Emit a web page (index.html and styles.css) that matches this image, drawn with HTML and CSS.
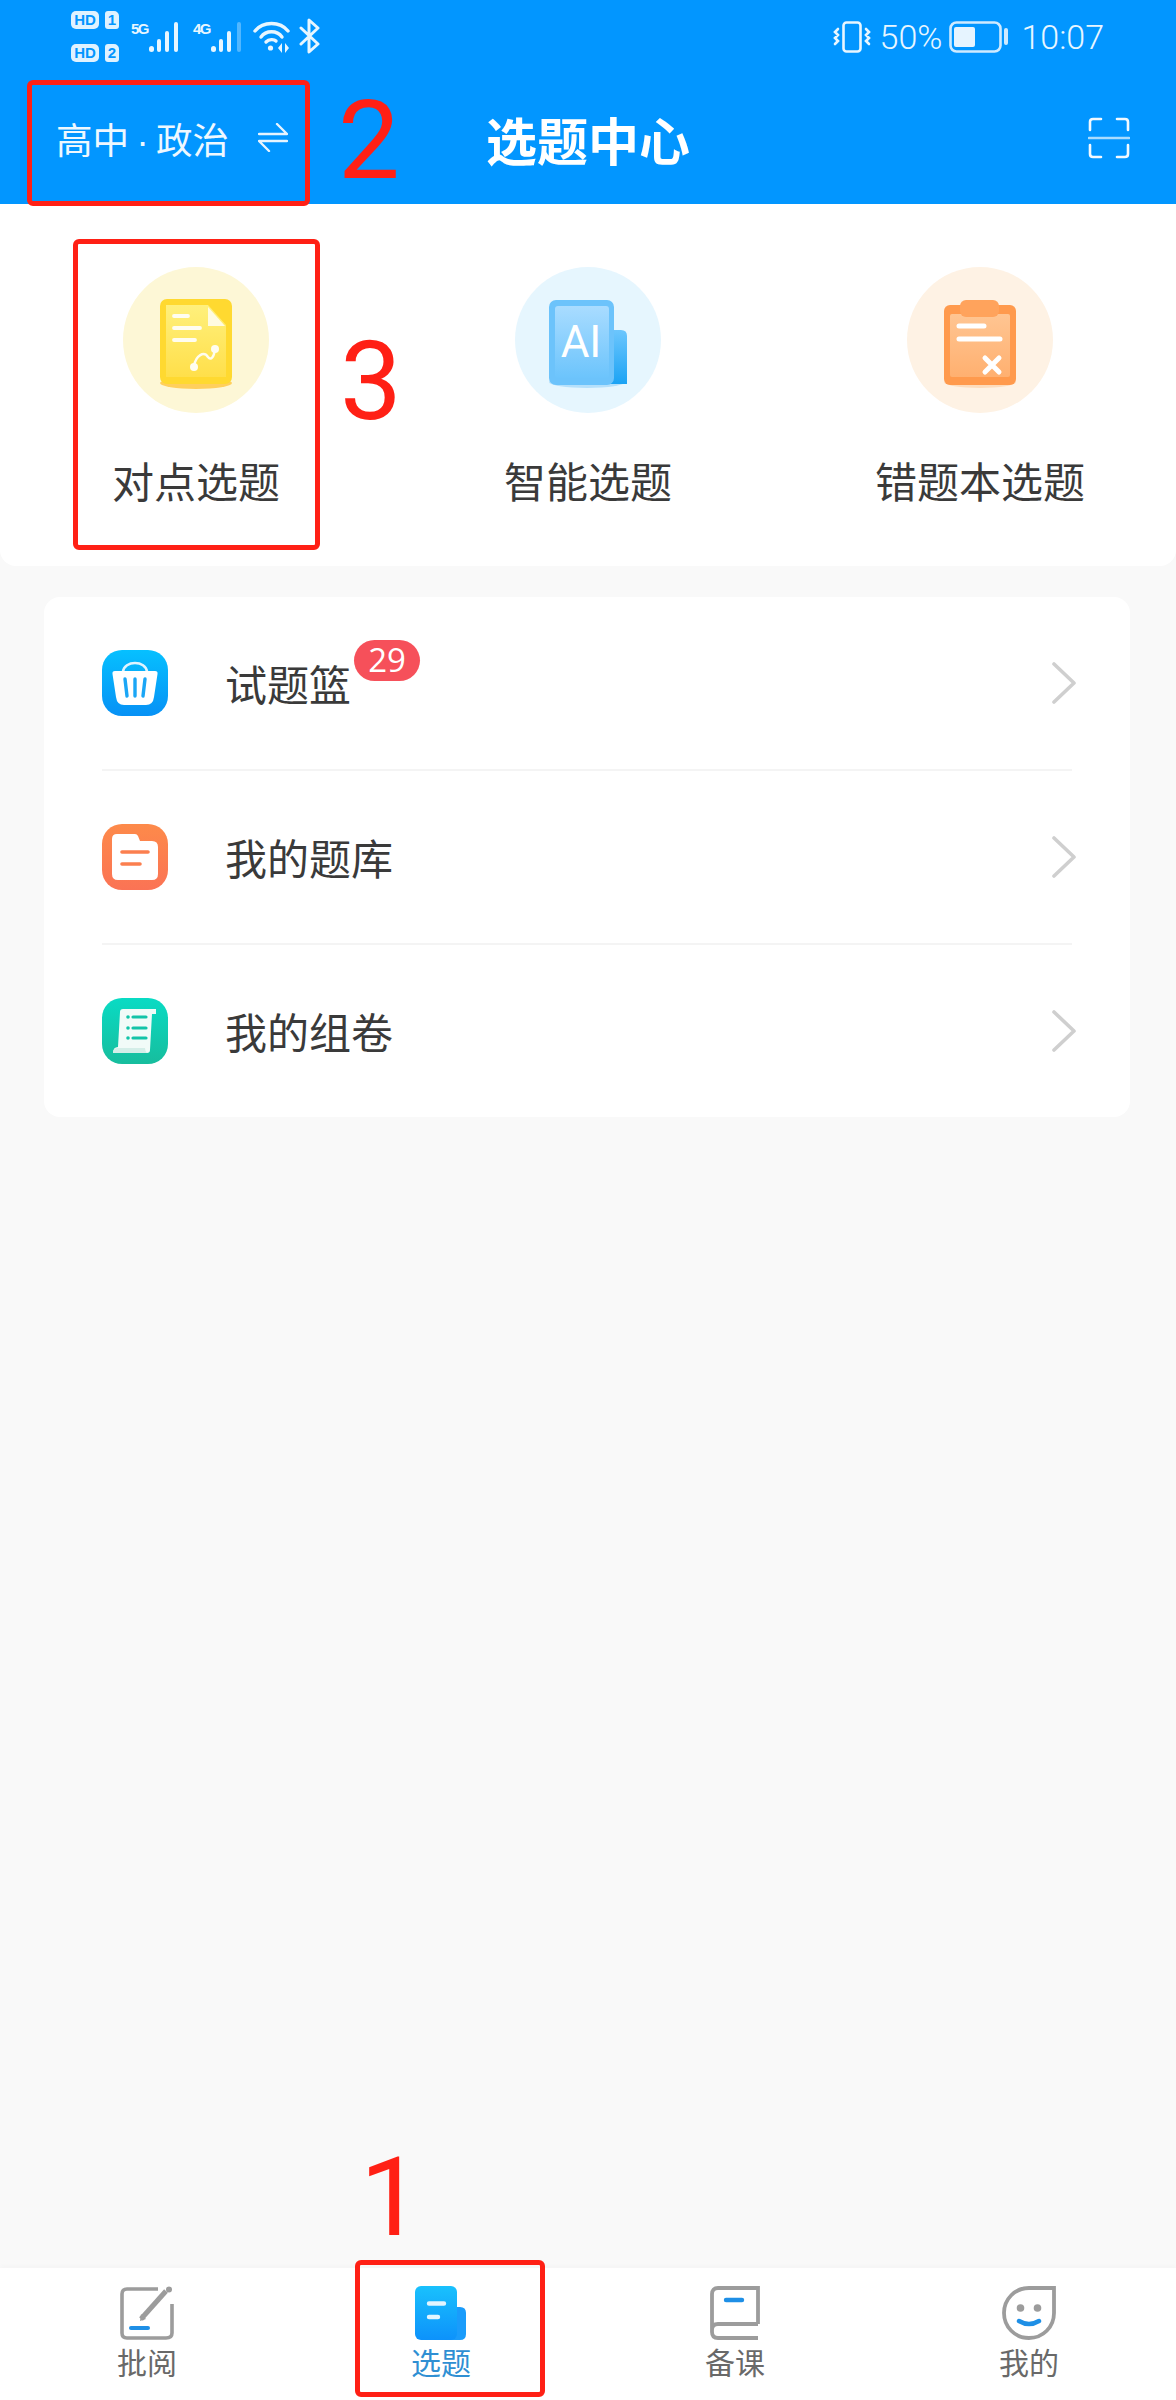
FILE: index.html
```html
<!DOCTYPE html>
<html lang="zh-CN">
<head>
  <meta charset="UTF-8">
  <meta name="viewport" content="width=device-width, initial-scale=1.0">
  <title>选题中心</title>
  <link rel="stylesheet" href="styles.css">
</head>
<body>
<div class="page">
  <!-- Header -->
  <header class="header">
    <div class="status-bar">
      <div class="status-left">
        <div class="sims">
          <div class="sim"><span class="hd">HD</span><span class="sim-no">1</span></div>
          <div class="sim"><span class="hd">HD</span><span class="sim-no">2</span></div>
        </div>
        <span class="net net-5g">5G</span>
        <svg class="bars" width="33" height="32" viewBox="0 0 33 32" fill="#e8f6ff">
          <rect x="1" y="25" width="5" height="6" rx="2.5"/><rect x="9" y="18" width="4" height="13" rx="2"/><rect x="17" y="10" width="4" height="21" rx="2"/><rect x="26" y="1" width="4" height="30" rx="2"/>
        </svg>
        <span class="net net-4g">4G</span>
        <svg class="bars" width="33" height="32" viewBox="0 0 33 32" fill="#e8f6ff">
          <rect x="1" y="25" width="5" height="6" rx="2.5"/><rect x="9" y="18" width="4" height="13" rx="2"/><rect x="17" y="10" width="4" height="21" rx="2"/><rect x="27" y="1" width="4" height="30" rx="2" opacity=".35"/>
        </svg>
        <svg class="wifi" width="38" height="32" viewBox="0 0 38 32" fill="none" stroke="#e8f6ff" stroke-width="3.4" stroke-linecap="round">
          <path d="M2 10C10 0 27 0 35 10"/>
          <path d="M8 16C13 9 24 9 29 16"/>
          <path d="M13 21C16 18 21 18 23 20"/>
          <circle cx="17.500" cy="27" r="2.600" fill="#e8f6ff" stroke="none"/>
          <path d="M29 22l-4 5 4 5zM32 22l4 5-4 5z" fill="#e8f6ff" stroke="none"/>
        </svg>
        <svg class="bt" width="21" height="36" viewBox="0 0 21 36" fill="none" stroke="#e8f6ff" stroke-width="3" stroke-linejoin="round" stroke-linecap="round">
          <path d="M2 10L19 26 10 34V2L19 10 2 26"/>
        </svg>
      </div>
      <div class="status-right">
        <svg class="vibrate" width="38" height="32" viewBox="0 0 38 32" fill="none" stroke="#e8f6ff" stroke-width="2.600">
          <rect x="10.500" y="1.500" width="17" height="29" rx="3"/>
          <path d="M5 8L2 11l3 3-3 3 3 3-3 3M33 8l3 3-3 3 3 3-3 3 3 3" stroke-linecap="round"/>
        </svg>
        <span class="stat-text pct">50%</span>
        <svg class="battery" width="60" height="32" viewBox="0 0 60 32">
          <rect x="1.500" y="1.500" width="50" height="29" rx="6" fill="none" stroke="#cfeaff" stroke-width="2.600"/>
          <rect x="5" y="6" width="21" height="20" rx="2" fill="#e6f4ff"/>
          <rect x="55" y="7" width="4" height="17" rx="2" fill="#cfeaff"/>
        </svg>
        <span class="stat-text time">10:07</span>
      </div>
    </div>

    <div class="nav-row">
      <div class="subject">
        <span class="subject-name">高中<span class="subject-dot">·</span>政治</span>
        <svg width="30" height="29" viewBox="0 0 30 29" fill="none" stroke="#e6f4ff" stroke-width="2.400" stroke-linecap="round" stroke-linejoin="round">
          <path d="M1 11H29L19 1"/>
          <path d="M29 18H1L11 28"/>
        </svg>
      </div>
      <h1 class="title">选题中心</h1>
      <svg class="scan" width="42" height="42" viewBox="0 0 42 42" fill="none" stroke="#f2f9ff" stroke-width="2.600" stroke-linecap="round">
        <path d="M13 2H5Q2 2 2 5V13M29 2H37Q40 2 40 5V13M2 28V37Q2 40 5 40H13M40 28V37Q40 40 37 40H29"/>
        <path d="M1 21H41" stroke="#a9dcff"/>
      </svg>
    </div>
  </header>

  <!-- Pick modes -->
  <section class="modes">
    <div class="mode">
      <div class="mode-circle circle-yellow">
        <svg width="72" height="90" viewBox="0 0 72 90">
          <defs>
            <linearGradient id="yellowDoc" x1="0" y1="0" x2="0" y2="1"><stop offset="0" stop-color="#fff07c"/><stop offset="1" stop-color="#ffdf4a"/></linearGradient>
          </defs>
          <ellipse cx="36" cy="84" rx="36" ry="6" fill="#ffcf5c"/>
          <rect x="0" y="0" width="72" height="85" rx="7" fill="#ffd930"/>
          <path d="M6 6H48L66 26V78H6Z" fill="url(#yellowDoc)"/>
          <path d="M48 8L65 27H48Z" fill="#fffbe0"/>
          <g fill="none" stroke="#fffdf0" stroke-linecap="round">
            <path d="M14 17H28M14 29H40M14 41H35" stroke-width="3.800"/>
            <path d="M34 67C36 56 44 52 48 58 51 62 54 58 55 50" stroke-width="2.400"/>
          </g>
          <circle cx="34" cy="68" r="4" fill="#fffdf0"/>
          <circle cx="55" cy="50" r="4" fill="#fffdf0"/>
        </svg>
      </div>
      <div class="mode-name">对点选题</div>
    </div>
    <div class="mode">
      <div class="mode-circle circle-blue">
        <svg width="78" height="88" viewBox="0 0 78 88">
          <defs>
            <linearGradient id="aiDoc" x1="0" y1="0" x2="0" y2="1"><stop offset="0" stop-color="#a9dcff"/><stop offset="1" stop-color="#6cc4fc"/></linearGradient>
            <linearGradient id="aiSide" x1="0" y1="0" x2="0" y2="1"><stop offset="0" stop-color="#6cc6fd"/><stop offset="1" stop-color="#1ba3f4"/></linearGradient>
          </defs>
          <ellipse cx="38" cy="82" rx="38" ry="6" fill="#b5e0fb"/>
          <path d="M60 30H72Q78 30 78 36V84H60Z" fill="url(#aiSide)"/>
          <rect x="0" y="0" width="65" height="85" rx="7" fill="#6cc3fb"/>
          <rect x="6" y="6" width="54" height="72" rx="3" fill="url(#aiDoc)"/>
          <text class="ai-text" x="32" y="57" text-anchor="middle">AI</text>
        </svg>
      </div>
      <div class="mode-name">智能选题</div>
    </div>
    <div class="mode">
      <div class="mode-circle circle-orange">
        <svg width="72" height="88" viewBox="0 0 72 88">
          <defs>
            <linearGradient id="clipBody" x1="0" y1="0" x2="0" y2="1"><stop offset="0" stop-color="#ffc592"/><stop offset="1" stop-color="#ffb070"/></linearGradient>
          </defs>
          <ellipse cx="36" cy="82" rx="36" ry="6" fill="#fddcbc"/>
          <rect x="0" y="5" width="72" height="80" rx="6" fill="#ff9a4d"/>
          <rect x="6" y="14" width="60" height="63" rx="2" fill="url(#clipBody)"/>
          <rect x="16" y="0" width="39" height="17" rx="6" fill="#ffa35c"/>
          <path d="M15 26H40M15 39H56M41 58L55 72M55 58L41 72" fill="none" stroke="#fff" stroke-width="5" stroke-linecap="round"/>
        </svg>
      </div>
      <div class="mode-name">错题本选题</div>
    </div>
  </section>

  <!-- Menu list -->
  <section class="menu">
    <div class="menu-row">
      <svg class="menu-icon" width="66" height="66" viewBox="0 0 66 66">
        <defs>
          <linearGradient id="basketBg" x1="0" y1="0" x2="0" y2="1"><stop offset="0" stop-color="#06c0ff"/><stop offset="1" stop-color="#0791f5"/></linearGradient>
        </defs>
        <rect width="66" height="66" rx="20" fill="url(#basketBg)"/>
        <path d="M21 22C22 10 44 10 45 22" fill="none" stroke="#dff4ff" stroke-width="2.600"/>
        <path d="M13 21H53Q56 21 55.500 24L52 47Q51 55 44 55H22Q15 55 14 47L10.500 24Q10 21 13 21Z" fill="#fff"/>
        <path d="M23 29L25 46M33 29V46M43 29L41 46" stroke="#1aa6f6" stroke-width="3.400" stroke-linecap="round"/>
      </svg>
      <div class="menu-label">试题篮<span class="badge">29</span></div>
      <svg class="chevron" width="24" height="42" viewBox="0 0 24 42" fill="none" stroke="#cfcfcf" stroke-width="3.600" stroke-linecap="round" stroke-linejoin="round">
        <path d="M2 2L22 21 2 40"/>
      </svg>
    </div>
    <div class="menu-row">
      <svg class="menu-icon" width="66" height="66" viewBox="0 0 66 66">
        <defs>
          <linearGradient id="folderBg" x1="0" y1="0" x2="0" y2="1"><stop offset="0" stop-color="#fd8a4a"/><stop offset="1" stop-color="#fb7355"/></linearGradient>
        </defs>
        <rect width="66" height="66" rx="20" fill="url(#folderBg)"/>
        <path d="M15 10H33Q35 10 36 12L38 17H50Q56 17 56 23V50Q56 56 50 56H16Q10 56 10 50V15Q10 10 15 10Z" fill="#fff"/>
        <path d="M20 28H46M20 40H38" stroke="#fb7f4f" stroke-width="3.600" stroke-linecap="round"/>
      </svg>
      <div class="menu-label">我的题库</div>
      <svg class="chevron" width="24" height="42" viewBox="0 0 24 42" fill="none" stroke="#cfcfcf" stroke-width="3.600" stroke-linecap="round" stroke-linejoin="round">
        <path d="M2 2L22 21 2 40"/>
      </svg>
    </div>
    <div class="menu-row">
      <svg class="menu-icon" width="66" height="66" viewBox="0 0 66 66">
        <defs>
          <linearGradient id="scrollBg" x1="0" y1="0" x2="0" y2="1"><stop offset="0" stop-color="#09dbc4"/><stop offset="1" stop-color="#17bd9d"/></linearGradient>
        </defs>
        <rect width="66" height="66" rx="20" fill="url(#scrollBg)"/>
        <path d="M18 14Q18 11 21 11H54V16H50L48 52Q48 55 45 55H11Q11 49 16 49Z" fill="#f1fbf8"/>
        <path d="M11 55Q11 50 16 50H43Q43 53 45 55Z" fill="#d4eee8"/>
        <circle cx="26" cy="19" r="1.800" fill="#12c4a8"/><circle cx="26" cy="30" r="1.800" fill="#12c4a8"/><circle cx="26" cy="40" r="1.800" fill="#12c4a8"/>
        <path d="M31 19H44M31 30H44M31 40H44" stroke="#12c4a8" stroke-width="3.200" stroke-linecap="round"/>
      </svg>
      <div class="menu-label">我的组卷</div>
      <svg class="chevron" width="24" height="42" viewBox="0 0 24 42" fill="none" stroke="#cfcfcf" stroke-width="3.600" stroke-linecap="round" stroke-linejoin="round">
        <path d="M2 2L22 21 2 40"/>
      </svg>
    </div>
  </section>

  <div class="spacer"></div>

  <!-- Tab bar -->
  <nav class="tabbar">
    <div class="tab">
      <svg width="54" height="54" viewBox="0 0 54 54" fill="none">
        <path d="M38 3H7Q2 3 2 8V47Q2 52 7 52H46Q52 52 52 47V18" stroke="#9c9c9c" stroke-width="3.600"/>
        <path d="M21 33L46 5" stroke="#9c9c9c" stroke-width="5"/>
        <path d="M21 28L26 33 20 35Z" fill="#9c9c9c"/>
        <circle cx="49" cy="3.500" r="3" fill="#9c9c9c"/>
        <path d="M11 42H28" stroke="#1e8fe6" stroke-width="4" stroke-linecap="round"/>
      </svg>
      <span class="tab-name">批阅</span>
    </div>
    <div class="tab tab-active">
      <svg width="52" height="54" viewBox="0 0 52 54">
        <defs>
          <linearGradient id="tabFront" x1="0" y1="0" x2="0" y2="1"><stop offset="0" stop-color="#19c1fd"/><stop offset="1" stop-color="#0d92fb"/></linearGradient>
        </defs>
        <path d="M36 21H45Q51 21 51 27V48Q51 54 45 54H36Z" fill="#1a9cfb"/>
        <rect x="0" y="0" width="42" height="54" rx="6" fill="url(#tabFront)"/>
        <path d="M14 17.500H29M14 31H23" stroke="#e2f5ff" stroke-width="4.400" stroke-linecap="round"/>
      </svg>
      <span class="tab-name">选题</span>
    </div>
    <div class="tab">
      <svg width="50" height="54" viewBox="0 0 50 54" fill="none" stroke="#9c9c9c" stroke-width="3.800">
        <path d="M48 38V2H8Q2 2 2 8V46Q2 52 8 52H48M2 44Q2 38 8 38H48"/>
        <path d="M16 14H32" stroke="#1e8fe6" stroke-width="4.400" stroke-linecap="round"/>
      </svg>
      <span class="tab-name">备课</span>
    </div>
    <div class="tab">
      <svg width="54" height="54" viewBox="0 0 54 54" fill="none">
        <path d="M52 2V27C52 41 41 52 27 52S2 41 2 27 13 2 27 2Z" stroke="#9c9c9c" stroke-width="3.800"/>
        <circle cx="18.500" cy="22" r="3.800" fill="#9c9c9c"/>
        <circle cx="35.500" cy="22" r="3.800" fill="#9c9c9c"/>
        <path d="M17 35Q27 41 37 35" stroke="#1e8fe6" stroke-width="4.400" stroke-linecap="round"/>
      </svg>
      <span class="tab-name">我的</span>
    </div>
  </nav>

  <!-- Red annotations on top of the screenshot -->
  <div class="mark mark-subject"></div>
  <div class="mark mark-mode"></div>
  <div class="mark mark-tab"></div>
  <span class="mark-no no-1">1</span>
  <span class="mark-no no-2">2</span>
  <span class="mark-no no-3">3</span>
</div>
</body>
</html>
```

FILE: styles.css
```css
:root {
  --blue: #0296ff;
  --text: #3a3a3a;
  --bg: #f9f9f9;
  --mark: #ff2015;
}

* {
  margin: 0;
  padding: 0;
  box-sizing: border-box;
}

body {
  background: var(--bg);
  color: var(--text);
  font-family: "Noto Sans CJK SC", "Noto Sans", sans-serif;
}

.page {
  position: relative;
  display: flex;
  flex-direction: column;
  height: 2400px;
  overflow: hidden;
}

/* Header */
.header {
  background: var(--blue);
  color: #fff;
  height: 204px;
  flex-shrink: 0;
}

.status-bar {
  display: flex;
  justify-content: space-between;
  height: 70px;
  padding: 0 72px 0 71px;
}

.status-left {
  display: flex;
  align-items: flex-start;
  padding-top: 11px;
}

.status-right {
  display: flex;
  align-items: flex-start;
  padding-top: 21px;
}

.sims {
  display: flex;
  flex-direction: column;
  gap: 15px;
  width: 60px;
}

.sim {
  display: flex;
  gap: 6px;
}

.hd,
.sim-no {
  background: #dff2ff;
  color: var(--blue);
  font-family: "Liberation Sans", sans-serif;
  font-weight: 700;
  font-size: 15px;
  line-height: 18px;
  height: 18px;
  text-align: center;
}

.hd {
  width: 28px;
  border-radius: 5px;
}

.sim-no {
  width: 14px;
  border-radius: 3px 5px 3px 3px;
}

.net {
  font-family: "Liberation Sans", sans-serif;
  font-weight: 700;
  font-size: 15px;
  line-height: 13px;
  color: #e8f6ff;
  margin-top: 11px;
  letter-spacing: -1.5px;
}

.net-5g {
  width: 17px;
}

.net-4g {
  width: 17px;
  margin-left: 12px;
}

.bars {
  margin-top: 10px;
}

.wifi {
  margin: 10px 0 0 10px;
}

.bt {
  margin: 7px 0 0 8px;
}

.stat-text {
  font-family: Roboto, sans-serif;
  font-weight: 300;
  font-size: 34px;
  line-height: 32px;
  color: #e8f6ff;
}

.pct {
  margin: 0 7px 0 9px;
}

.time {
  margin-left: 12px;
}

.nav-row {
  position: relative;
  display: flex;
  justify-content: space-between;
  align-items: center;
  height: 134px;
  padding: 0 46px 0 56px;
}

.subject {
  display: flex;
  align-items: center;
  gap: 29px;
  color: #eef8ff;
}

.subject-name {
  font-size: 36.500px;
  line-height: 40px;
  margin-top: 7px;
}

.subject-dot {
  display: inline-block;
  width: 27px;
  text-align: center;
  font-family: "Liberation Sans", sans-serif;
}

.title {
  position: absolute;
  left: 0;
  right: 0;
  top: 42px;
  text-align: center;
  font-size: 51px;
  line-height: 54px;
  font-weight: 700;
}

.scan {
  margin-top: 2px;
}

/* Pick modes */
.modes {
  display: grid;
  grid-template-columns: repeat(3, 1fr);
  height: 362px;
  background: #fff;
  border-radius: 0 0 16px 16px;
  padding-top: 63px;
  flex-shrink: 0;
}

.mode {
  display: flex;
  flex-direction: column;
  align-items: center;
}

.mode-circle {
  display: flex;
  align-items: center;
  justify-content: center;
  width: 146px;
  height: 146px;
  padding-top: 8px;
  border-radius: 50%;
}

.circle-yellow {
  background: #fdf7d6;
}

.circle-blue {
  background: #e6f6fe;
}

.circle-orange {
  background: #fef2e4;
}

.ai-text {
  font-family: Roboto, sans-serif;
  font-weight: 400;
  font-size: 44px;
  fill: #fff;
}

.mode-name {
  margin-top: 38px;
  font-size: 42px;
  line-height: 58px;
  white-space: nowrap;
}

/* Menu list */
.menu {
  margin: 31px 46px 0 44px;
  padding: 0 58px;
  background: #fff;
  border-radius: 16px;
  flex-shrink: 0;
}

.menu-row {
  display: flex;
  align-items: center;
  height: 174px;
  border-bottom: 2px solid #f4f4f4;
}

.menu-row:last-child {
  border-bottom: none;
  height: 172px;
}

.menu-icon {
  flex-shrink: 0;
}

.menu-label {
  position: relative;
  flex: 1;
  margin-left: 57px;
  font-size: 42px;
  line-height: 56px;
}

.badge {
  position: absolute;
  left: 129px;
  top: -15px;
  width: 66px;
  height: 41px;
  border-radius: 21px;
  background: #f6505a;
  color: #fff;
  font-family: "Open Sans", sans-serif;
  font-size: 33px;
  line-height: 40px;
  text-align: center;
}

.chevron {
  margin-right: -4px;
  flex-shrink: 0;
}

.spacer {
  flex: 1;
}

/* Tab bar */
.tabbar {
  display: grid;
  grid-template-columns: repeat(4, 1fr);
  height: 132px;
  padding-top: 18px;
  background: #fff;
  box-shadow: 0 -3px 4px rgba(0, 0, 0, 0.015);
  flex-shrink: 0;
}

.tab {
  display: flex;
  flex-direction: column;
  align-items: center;
}

.tab-name {
  margin-top: 1px;
  font-size: 30px;
  line-height: 40px;
  color: #696969;
}

.tab-active .tab-name {
  color: #2f8fd3;
}

/* Red annotations */
.mark {
  position: absolute;
  border: 5px solid var(--mark);
  border-radius: 6px;
}

.mark-subject {
  left: 27px;
  top: 80px;
  width: 283px;
  height: 126px;
}

.mark-mode {
  left: 73px;
  top: 239px;
  width: 247px;
  height: 311px;
}

.mark-tab {
  left: 355px;
  top: 2260px;
  width: 190px;
  height: 137px;
}

.mark-no {
  position: absolute;
  font-family: Roboto, sans-serif;
  font-weight: 400;
  font-size: 110px;
  line-height: 110px;
  color: var(--mark);
}

.no-1 {
  left: 360px;
  top: 2143px;
}

.no-2 {
  left: 338px;
  top: 86px;
}

.no-3 {
  left: 340px;
  top: 327px;
}
```
